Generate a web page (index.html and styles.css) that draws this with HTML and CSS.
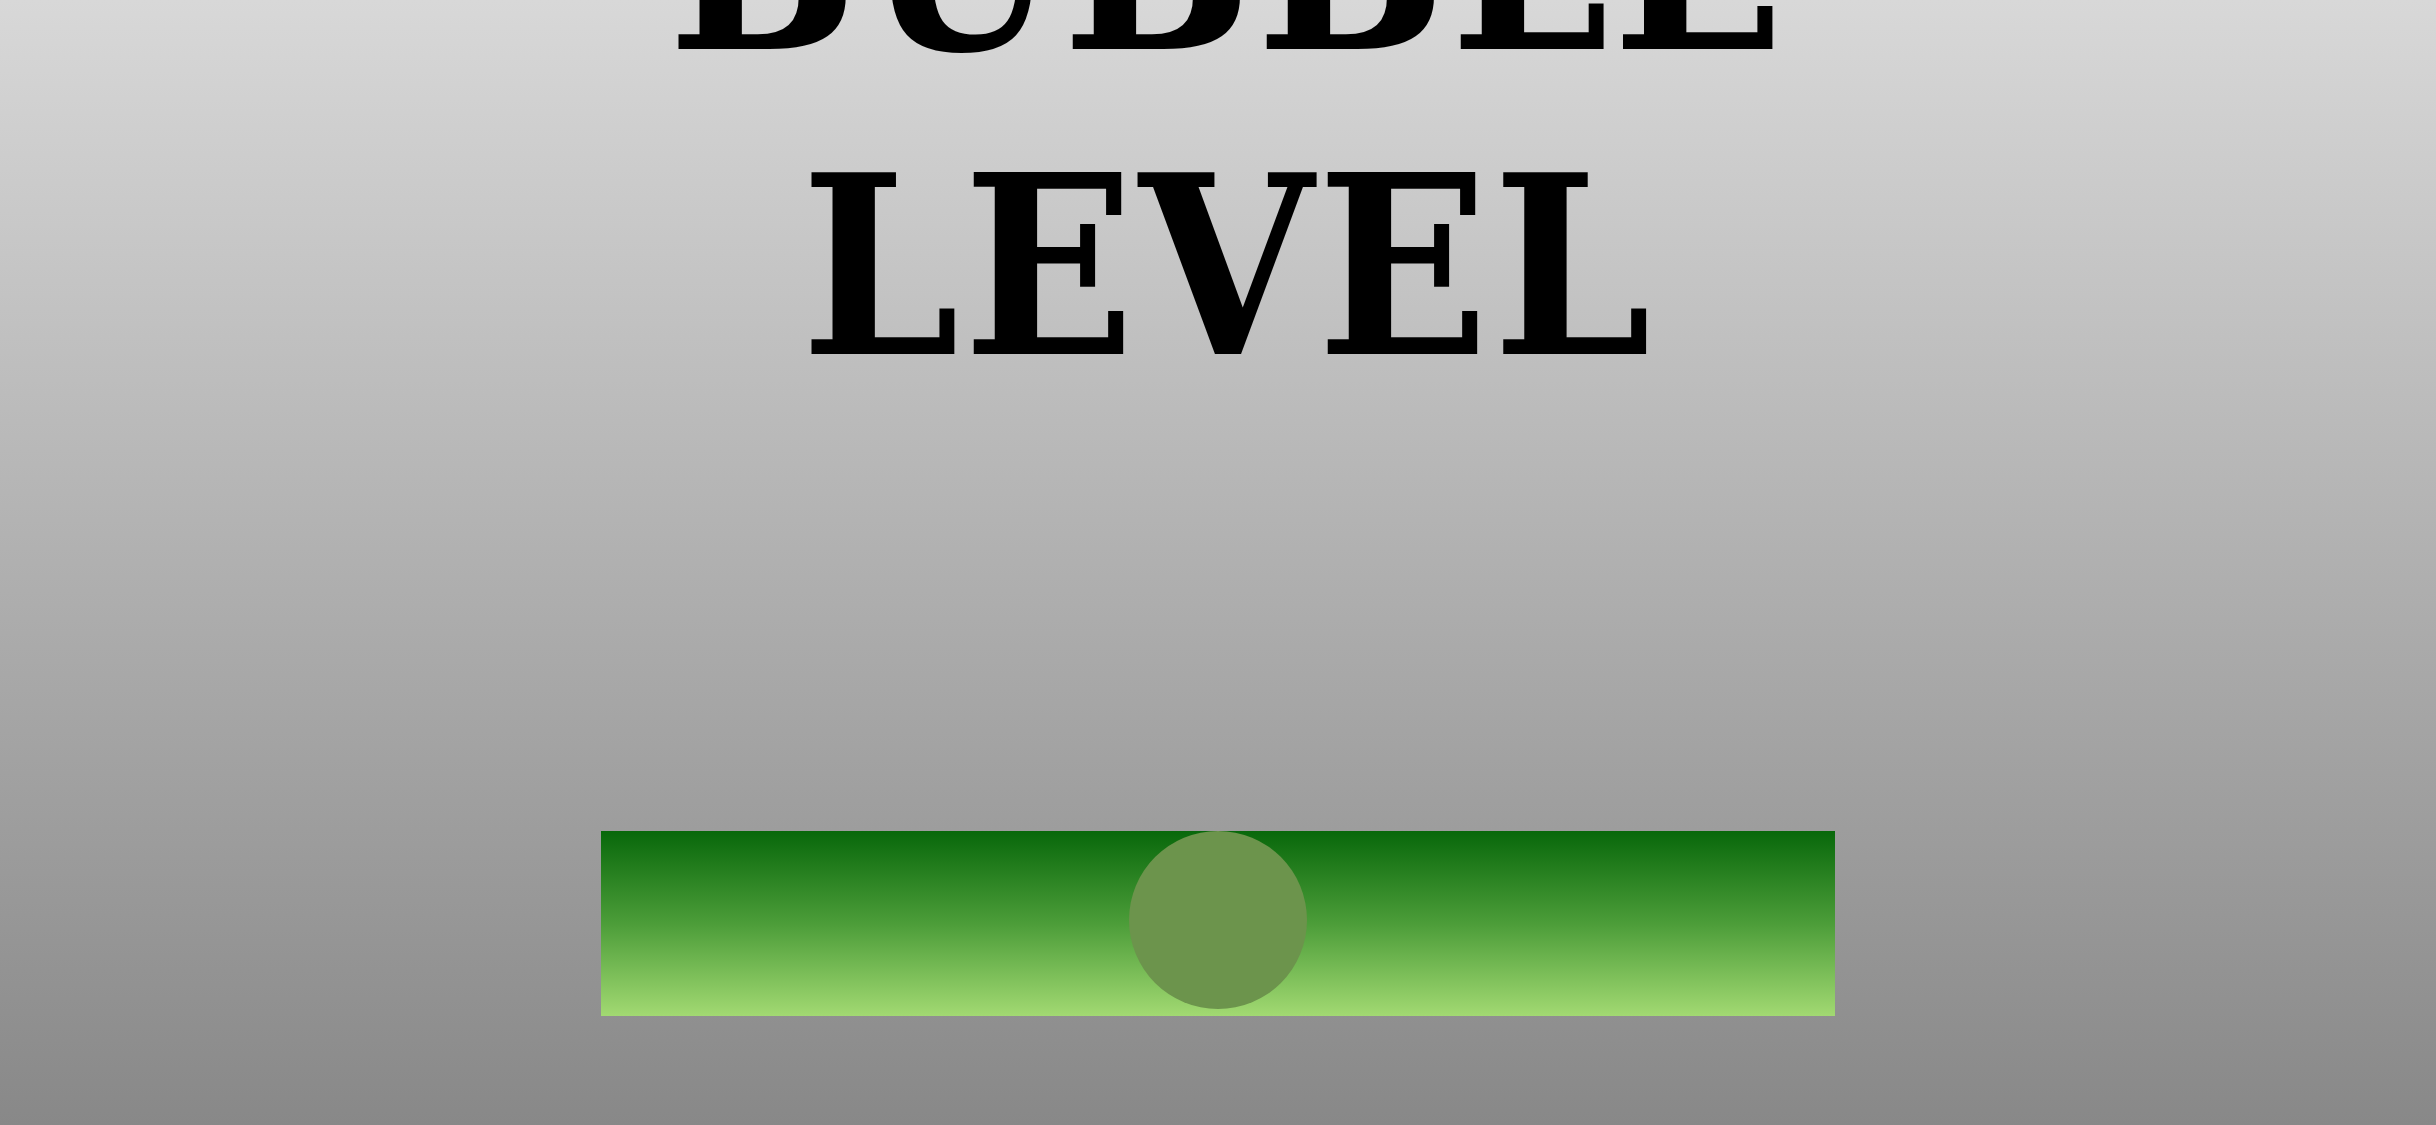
FILE: index.html
```html
<!DOCTYPE html>
<html lang="en">
<head>
<meta charset="utf-8">
<title>Bubble Level</title>
<link rel="stylesheet" href="styles.css">
</head>
<body>
<main class="app">
  <h1 class="title">BUBBLE<br>LEVEL</h1>
  <div class="level">
    <div class="bubble"></div>
  </div>
</main>
</body>
</html>
```
FILE: styles.css
```css
html, body {
  margin: 0;
  padding: 0;
  height: 100%;
}
body {
  background: linear-gradient(to bottom, #d8d8d8 0%, #888888 100%);
  overflow: hidden;
}
.app {
  display: flex;
  flex-direction: column;
  align-items: center;
  height: 100%;
}
.title {
  margin: -191px 0 0 0;
  padding-left: 20px;
  font-family: "DejaVu Serif", "Liberation Serif", serif;
  font-weight: bold;
  font-stretch: condensed;
  font-size: 250px;
  line-height: 305px;
  letter-spacing: 4px;
  color: #000;
  text-align: center;
}
.level {
  margin-top: 412px;
  width: 1234px;
  height: 185px;
  background: linear-gradient(to bottom, #08680b 0%, #4c9d39 50%, #a2d972 100%);
  display: flex;
  justify-content: center;
  align-items: flex-start;
}
.bubble {
  width: 178px;
  height: 178px;
  border-radius: 50%;
  background: #6c944c;
}
```
